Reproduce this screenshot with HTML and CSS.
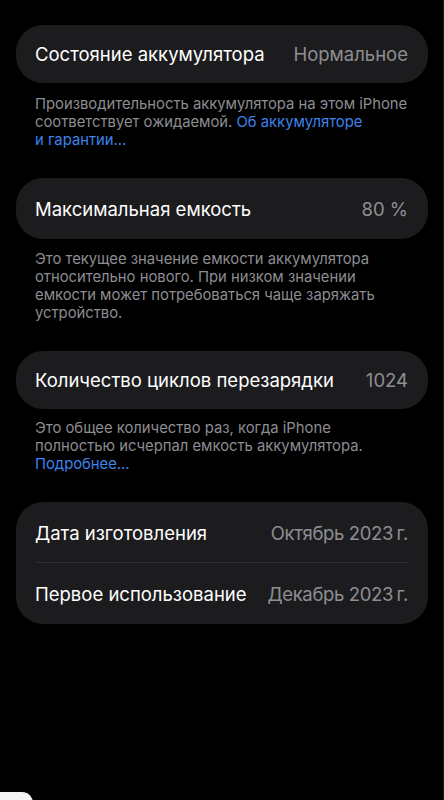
FILE: index.html
```html
<!DOCTYPE html>
<html lang="ru">
<head>
  <meta charset="UTF-8">
  <meta name="viewport" content="width=device-width, initial-scale=1.0">
  <title>Состояние аккумулятора</title>
  <link rel="stylesheet" href="styles.css">
</head>
<body>
  <div class="screen">
    <div class="group">
      <div class="card">
        <div class="row">
          <span class="label">Состояние аккумулятора</span>
          <span class="value">Нормальное</span>
        </div>
      </div>
      <p class="note first">
        Производительность аккумулятора на этом iPhone<br>
        соответствует ожидаемой. <a href="#" class="link">Об аккумуляторе<br>и гарантии…</a>
      </p>
    </div>

    <div class="group">
      <div class="card">
        <div class="row tall">
          <span class="label">Максимальная емкость</span>
          <span class="value">80 %</span>
        </div>
      </div>
      <p class="note">
        Это текущее значение емкости аккумулятора<br>
        относительно нового. При низком значении<br>
        емкости может потребоваться чаще заряжать<br>
        устройство.
      </p>
    </div>

    <div class="group">
      <div class="card">
        <div class="row">
          <span class="label">Количество циклов перезарядки</span>
          <span class="value">1024</span>
        </div>
      </div>
      <p class="note tight">
        Это общее количество раз, когда iPhone<br>
        полностью исчерпал емкость аккумулятора.<br>
        <a href="#" class="link">Подробнее…</a>
      </p>
    </div>

    <div class="group">
      <div class="card">
        <div class="row tall divided">
          <span class="label">Дата изготовления</span>
          <span class="value date">Октябрь 2023&#8239;г.</span>
        </div>
        <div class="row tall">
          <span class="label">Первое использование</span>
          <span class="value date">Декабрь 2023&#8239;г.</span>
        </div>
      </div>
    </div>
  </div>

  <!-- edge of the next screenshot tile -->
  <div class="peek"></div>
</body>
</html>
```

FILE: styles.css
```css
* {
  box-sizing: border-box;
  margin: 0;
  padding: 0;
}

body {
  font-family: Inter, "Noto Sans", sans-serif;
  background-color: #000;
  color: #fff;
  width: 444px;
  height: 800px;
  overflow: hidden;
  position: relative;
  border-right: 1px solid #1d1d1f;
}

.screen {
  display: flex;
  flex-direction: column;
  gap: 29px;
  padding: 25px 15px 0 16px;
}

.card {
  background: #1c1c1e;
  border-radius: 27px;
}

.row {
  display: flex;
  justify-content: space-between;
  align-items: center;
  height: 58px;
  padding: 0 20px 0 19px;
  font-size: 18.5px;
}

.row.tall {
  height: 61px;
}

.row.divided {
  position: relative;
}

/* thin separator, inset like iOS lists */
.row.divided::after {
  content: "";
  position: absolute;
  left: 19px;
  right: 19px;
  bottom: 0;
  height: 1px;
  background: #2e2e31;
}

.label {
  color: #fff;
}

.value {
  color: #8e8e93;
  white-space: nowrap;
}

.value.date {
  letter-spacing: -0.35px;
}

.note {
  margin-top: 11px;
  padding-left: 19px;
  font-size: 14.8px;
  line-height: 18px;
  color: #8d8d92;
}

.note.first {
  margin-top: 12px;
}

.note.tight {
  margin-top: 10px;
}

.link {
  color: #3d84ec;
  text-decoration: none;
}

.peek {
  position: absolute;
  left: 0;
  top: 792px;
  width: 33px;
  height: 20px;
  background: #f4f4f4;
  border-top-right-radius: 11px;
}
```
